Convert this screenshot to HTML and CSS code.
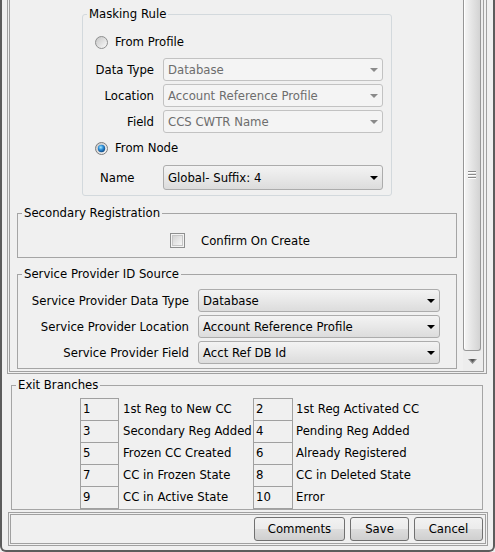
FILE: index.html
```html
<!DOCTYPE html>
<html>
<head>
<meta charset="utf-8">
<link rel="stylesheet" href="styles.css">
</head>
<body>
<div class="window">
  <div class="scrollpane">
    <div class="viewport">
      <div class="content">
        <fieldset class="masking">
          <legend>Masking Rule</legend>
          <div class="radio-row r1">
            <svg class="radio" width="13" height="13" viewBox="0 0 13 13"><defs><linearGradient id="rbg1" x1="0" y1="0" x2="1" y2="1"><stop offset="0" stop-color="#c4c4c4"/><stop offset="1" stop-color="#fcfcfc"/></linearGradient></defs><circle cx="6.5" cy="6.5" r="6" fill="url(#rbg1)" stroke="#8e8f8f"/></svg>
            <span>From Profile</span>
          </div>
          <div class="mrow first"><label>Data Type</label><div class="combo disabled"><span>Database</span><svg width="8" height="4" viewBox="0 0 8 4"><polygon points="0,0 8,0 4,4" fill="#8a8a8a"/></svg></div></div>
          <div class="mrow"><label>Location</label><div class="combo disabled"><span>Account Reference Profile</span><svg width="8" height="4" viewBox="0 0 8 4"><polygon points="0,0 8,0 4,4" fill="#8a8a8a"/></svg></div></div>
          <div class="mrow"><label>Field</label><div class="combo disabled"><span>CCS CWTR Name</span><svg width="8" height="4" viewBox="0 0 8 4"><polygon points="0,0 8,0 4,4" fill="#8a8a8a"/></svg></div></div>
          <div class="radio-row r2">
            <svg class="radio" width="13" height="13" viewBox="0 0 13 13"><defs><linearGradient id="rbg2" x1="0" y1="0" x2="1" y2="1"><stop offset="0" stop-color="#c4c4c4"/><stop offset="1" stop-color="#fcfcfc"/></linearGradient><radialGradient id="dot" cx="0.4" cy="0.35" r="0.75"><stop offset="0" stop-color="#a8ecff"/><stop offset="0.45" stop-color="#2b8bd6"/><stop offset="1" stop-color="#0a3a70"/></radialGradient></defs><circle cx="6.5" cy="6.5" r="6" fill="url(#rbg2)" stroke="#7d7d7d"/><circle cx="6.5" cy="6.5" r="3.7" fill="url(#dot)"/></svg>
            <span>From Node</span>
          </div>
          <div class="mrow name-row"><label>Name</label><div class="combo"><span>Global- Suffix: 4</span><svg width="8" height="4" viewBox="0 0 8 4"><polygon points="0,0 8,0 4,4" fill="#000"/></svg></div></div>
        </fieldset>

        <fieldset class="etched secondary">
          <legend>Secondary Registration</legend>
          <div class="check-row">
            <svg width="15" height="15" viewBox="0 0 15 15"><defs><linearGradient id="cbg" x1="0" y1="0" x2="1" y2="1"><stop offset="0" stop-color="#d2d2d2"/><stop offset="1" stop-color="#f8f8f8"/></linearGradient></defs><rect x="0.5" y="0.5" width="14" height="14" fill="#f4f4f4" stroke="#8e8f8f"/><rect x="2.5" y="2.5" width="10" height="10" fill="url(#cbg)" stroke="#c6c6c6"/></svg>
            <span>Confirm On Create</span>
          </div>
        </fieldset>

        <fieldset class="etched provider">
          <legend>Service Provider ID Source</legend>
          <div class="prow first"><label>Service Provider Data Type</label><div class="combo"><span>Database</span><svg width="8" height="4" viewBox="0 0 8 4"><polygon points="0,0 8,0 4,4" fill="#000"/></svg></div></div>
          <div class="prow"><label>Service Provider Location</label><div class="combo"><span>Account Reference Profile</span><svg width="8" height="4" viewBox="0 0 8 4"><polygon points="0,0 8,0 4,4" fill="#000"/></svg></div></div>
          <div class="prow"><label>Service Provider Field</label><div class="combo"><span>Acct Ref DB Id</span><svg width="8" height="4" viewBox="0 0 8 4"><polygon points="0,0 8,0 4,4" fill="#000"/></svg></div></div>
        </fieldset>
      </div>
      <div class="scrollbar">
        <div class="thumb">
          <svg width="8" height="8" viewBox="0 0 8 8"><g fill="#8a8a8a"><rect x="0" y="0" width="8" height="1"/><rect x="0" y="3" width="8" height="1"/><rect x="0" y="6" width="8" height="1"/></g><g fill="#ffffff"><rect x="0" y="1" width="8" height="1"/><rect x="0" y="4" width="8" height="1"/><rect x="0" y="7" width="8" height="1"/></g></svg>
        </div>
        <div class="arrow-btn">
          <svg width="9" height="5" viewBox="0 0 9 5"><polygon points="0,0 9,0 4.5,5" fill="#8a8a8a"/><polygon points="2,0 7,0 4.5,3" fill="#555"/></svg>
        </div>
      </div>
    </div>
  </div>

  <fieldset class="etched exit">
    <legend>Exit Branches</legend>
    <div class="branches">
      <div class="num">1</div><div class="lbl">1st Reg to New CC</div><div class="num">2</div><div class="lbl lbl2">1st Reg Activated CC</div>
      <div class="num">3</div><div class="lbl">Secondary Reg Added</div><div class="num">4</div><div class="lbl lbl2">Pending Reg Added</div>
      <div class="num">5</div><div class="lbl">Frozen CC Created</div><div class="num">6</div><div class="lbl lbl2">Already Registered</div>
      <div class="num">7</div><div class="lbl">CC in Frozen State</div><div class="num">8</div><div class="lbl lbl2">CC in Deleted State</div>
      <div class="num last">9</div><div class="lbl">CC in Active State</div><div class="num last">10</div><div class="lbl lbl2">Error</div>
    </div>
  </fieldset>

  <div class="south">
    <div class="buttons">
      <button class="b-comments">Comments</button>
      <button class="b-save">Save</button>
      <button class="b-cancel">Cancel</button>
    </div>
  </div>
</div>
</body>
</html>
```
FILE: styles.css
```css
* { box-sizing: border-box; }
html, body { margin: 0; padding: 0; }
body {
  background: #f0f0f0;
  font-family: "DejaVu Sans", "Liberation Sans", sans-serif;
  font-size: 11.7px;
  color: #000;
}
.window {
  width: 495px;
  height: 552px;
  border: 2px solid #5c5c5c;
  border-top: 0;
  border-radius: 0 0 6px 6px;
  background: #f0f0f0;
}
.scrollpane {
  margin-left: 5px;
  width: 480px;
  height: 374px;
  border: 1px solid #a0a0a0;
  border-top: 0;
  padding: 0 2px 1px 1px;
}
.viewport {
  height: 100%;
  border: 1px solid #a0a0a0;
  border-top: 0;
  display: flex;
}
.content {
  width: 453px;
  flex: none;
  display: flex;
  flex-direction: column;
  align-items: flex-start;
}
fieldset {
  margin: 0;
  padding: 0;
  min-width: 0;
  border: 1px solid #a5a5a5;
}
legend {
  padding: 0 2px;
  margin-left: 4px;
  line-height: 15px;
}
.masking {
  margin: 7px 0 0 72px;
  width: 310px;
  border-color: #d3d9dd;
  border-radius: 3px;
  padding-bottom: 5px;
}
.radio-row {
  display: flex;
  align-items: center;
  height: 14px;
  margin-left: 12px;
  gap: 7px;
  line-height: 14px;
}
.r1 { margin-top: 13px; }
.r2 { margin-top: 8px; }
.mrow {
  display: flex;
  align-items: center;
  height: 23px;
  margin-top: 3px;
}
.mrow.first { margin-top: 9px; }
.mrow label {
  width: 71px;
  text-align: right;
  margin-right: 9px;
  flex: none;
}
.mrow .combo { width: 220px; }
.mrow.name-row { margin-top: 10px; height: 25px; }
.mrow.name-row label { text-align: left; padding-left: 17px; }

.combo {
  height: 100%;
  flex: none;
  display: flex;
  align-items: center;
  justify-content: space-between;
  padding: 0 4px;
  border: 1px solid #acacac;
  border-radius: 3px;
  background: linear-gradient(#f3f3f3, #e8e8e8 50%, #dcdcdc);
  white-space: nowrap;
}
.combo.disabled {
  background: #f4f4f4;
  border-color: #c2c2c2;
  color: #6d6d6d;
}

.secondary {
  margin: 10px 0 0 7px;
  width: 440px;
  padding-bottom: 9px;
}
.check-row {
  margin: 12px 0 0 152px;
  display: flex;
  align-items: center;
  height: 15px;
  gap: 16px;
}
.provider {
  margin: 9px 0 0 7px;
  width: 440px;
  padding-bottom: 4px;
}
.prow {
  display: flex;
  align-items: center;
  height: 23px;
  margin-top: 3px;
}
.prow.first { margin-top: 7px; }
.prow label {
  width: 171px;
  text-align: right;
  margin-right: 9px;
  flex: none;
}
.prow .combo { width: 242px; }

.scrollbar {
  width: 20px;
  flex: none;
  display: flex;
  flex-direction: column;
  padding-right: 2px;
  background: #ededed;
}
.thumb {
  flex: 1;
  border: 1px solid #979797;
  border-top: 0;
  border-radius: 0 0 3px 3px;
  background: linear-gradient(90deg, #f7f7f7, #e6e6e6 45%, #d3d3d3);
  box-shadow: inset 1px 0 #ffffff;
  display: flex;
  align-items: center;
  justify-content: center;
}
.arrow-btn {
  height: 20px;
  flex: none;
  display: flex;
  align-items: center;
  justify-content: center;
}

.exit {
  margin: 4px 0 0 9px;
  width: 472px;
}
.branches {
  margin: 5px 0 0 68px;
  display: grid;
  grid-template-columns: 39px 134px 40px 1fr;
}
.num {
  border: 1px solid #a0a0a0;
  border-bottom: 0;
  height: 22px;
  line-height: 21px;
  padding-left: 2px;
}
.num.last {
  border-bottom: 1px solid #a0a0a0;
  height: 23px;
}
.lbl {
  height: 22px;
  line-height: 21px;
  padding: 1px 0 0 4px;
  white-space: nowrap;
}
.lbl2 { padding-left: 3px; }

.south {
  margin: 2px 0 0 6px;
  width: 480px;
  height: 34px;
  border: 1px solid #a0a0a0;
  padding: 1px;
}
.buttons {
  height: 100%;
  border: 1px solid #a0a0a0;
  display: flex;
  justify-content: flex-end;
  align-items: center;
  gap: 5px;
  padding-right: 2px;
}
button {
  height: 24px;
  font: inherit;
  color: #000;
  padding: 0;
  border: 1px solid #707070;
  border-radius: 3px;
  background: linear-gradient(#f2f2f2, #ebebeb 50%, #dddddd 50%, #cfcfcf);
}
.b-comments { width: 91px; }
.b-save { width: 59px; }
.b-cancel { width: 69px; }
```
